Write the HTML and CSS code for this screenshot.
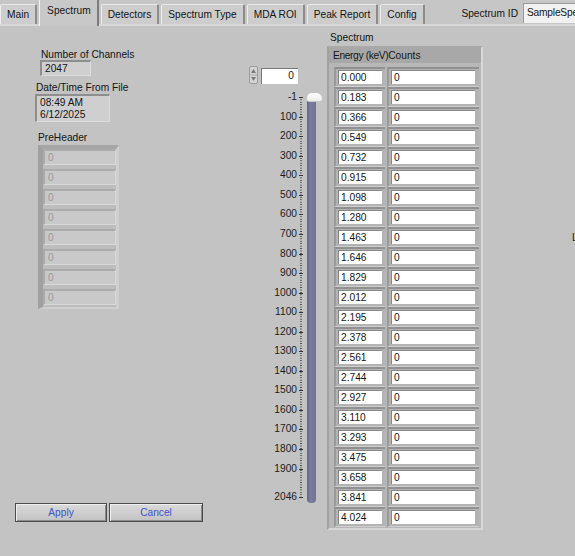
FILE: index.html
```html
<!DOCTYPE html>
<html lang="en">
<head>
    <meta charset="UTF-8">
    <title>Spectrum</title>
    <link rel="stylesheet" href="styles.css">
</head>
<body>

    <div class="tabbar">
        <div class="tab">Main</div>
        <div class="tab tab-active">Spectrum</div>
        <div class="tab">Detectors</div>
        <div class="tab">Spectrum Type</div>
        <div class="tab">MDA ROI</div>
        <div class="tab">Peak Report</div>
        <div class="tab">Config</div>
        <div class="spec-id">
            <span class="spec-id-label">Spectrum ID</span>
            <div class="spec-id-box">SampleSpec</div>
        </div>
    </div>

    <div class="page">

        <!-- left: file info -->
        <div class="left">
            <div class="num-label">Number of Channels</div>
            <div class="ind num-box">2047</div>
            <div class="dt-label">Date/Time From File</div>
            <div class="ind dt-box">08:49 AM<br>6/12/2025</div>
            <div class="pre-label">PreHeader</div>
            <div class="pre-array">
                <div class="pre-item">0</div>
                <div class="pre-item">0</div>
                <div class="pre-item">0</div>
                <div class="pre-item">0</div>
                <div class="pre-item">0</div>
                <div class="pre-item">0</div>
                <div class="pre-item">0</div>
                <div class="pre-item">0</div>
            </div>
            <div class="buttons">
                <div class="btn btn-apply">Apply</div>
                <div class="btn btn-cancel">Cancel</div>
            </div>
        </div>

        <!-- middle: index control + scrollbar slider -->
        <div class="scale-col">
            <div class="numctl">
                <div class="spin">
                    <svg width="7" height="16" viewBox="0 0 7 16">
                        <path d="M3.5 2 L6 6 L1 6 Z" fill="#7a7a7a"/>
                        <line x1="0" y1="8" x2="7" y2="8" stroke="#a8a8a8" stroke-width="1"/>
                        <path d="M1 10 L6 10 L3.5 14 Z" fill="#7a7a7a"/>
                    </svg>
                </div>
                <div class="num-input">0</div>
            </div>
            <div class="slider">
                <div class="labels">
                    <span class="lbl" style="top:5.0px">-1</span>
                    <span class="lbl" style="top:24.7px">100</span>
                    <span class="lbl" style="top:44.3px">200</span>
                    <span class="lbl" style="top:63.8px">300</span>
                    <span class="lbl" style="top:83.4px">400</span>
                    <span class="lbl" style="top:102.9px">500</span>
                    <span class="lbl" style="top:122.4px">600</span>
                    <span class="lbl" style="top:142.0px">700</span>
                    <span class="lbl" style="top:161.5px">800</span>
                    <span class="lbl" style="top:181.1px">900</span>
                    <span class="lbl" style="top:200.6px">1000</span>
                    <span class="lbl" style="top:220.1px">1100</span>
                    <span class="lbl" style="top:239.7px">1200</span>
                    <span class="lbl" style="top:259.2px">1300</span>
                    <span class="lbl" style="top:278.8px">1400</span>
                    <span class="lbl" style="top:298.3px">1500</span>
                    <span class="lbl" style="top:317.9px">1600</span>
                    <span class="lbl" style="top:337.4px">1700</span>
                    <span class="lbl" style="top:356.9px">1800</span>
                    <span class="lbl" style="top:376.5px">1900</span>
                    <span class="lbl" style="top:405.0px">2046</span>
                </div>
                <div class="ticks"></div>
                <div class="track-wrap">
                    <div class="track"></div>
                    <div class="thumb"></div>
                </div>
            </div>
        </div>

        <!-- right: spectrum table -->
        <div class="spectrum">
            <div class="spec-label">Spectrum</div>
            <div class="spec-frame">
                <div class="spec-head">
                    <span class="head-energy">Energy (keV)</span><span>Counts</span>
                </div>
                <div class="rows">
                    <div class="row"><div class="cell c-energy"><div class="box">0.000</div></div><div class="cell c-counts"><div class="box">0</div></div></div>
                    <div class="row"><div class="cell c-energy"><div class="box">0.183</div></div><div class="cell c-counts"><div class="box">0</div></div></div>
                    <div class="row"><div class="cell c-energy"><div class="box">0.366</div></div><div class="cell c-counts"><div class="box">0</div></div></div>
                    <div class="row"><div class="cell c-energy"><div class="box">0.549</div></div><div class="cell c-counts"><div class="box">0</div></div></div>
                    <div class="row"><div class="cell c-energy"><div class="box">0.732</div></div><div class="cell c-counts"><div class="box">0</div></div></div>
                    <div class="row"><div class="cell c-energy"><div class="box">0.915</div></div><div class="cell c-counts"><div class="box">0</div></div></div>
                    <div class="row"><div class="cell c-energy"><div class="box">1.098</div></div><div class="cell c-counts"><div class="box">0</div></div></div>
                    <div class="row"><div class="cell c-energy"><div class="box">1.280</div></div><div class="cell c-counts"><div class="box">0</div></div></div>
                    <div class="row"><div class="cell c-energy"><div class="box">1.463</div></div><div class="cell c-counts"><div class="box">0</div></div></div>
                    <div class="row"><div class="cell c-energy"><div class="box">1.646</div></div><div class="cell c-counts"><div class="box">0</div></div></div>
                    <div class="row"><div class="cell c-energy"><div class="box">1.829</div></div><div class="cell c-counts"><div class="box">0</div></div></div>
                    <div class="row"><div class="cell c-energy"><div class="box">2.012</div></div><div class="cell c-counts"><div class="box">0</div></div></div>
                    <div class="row"><div class="cell c-energy"><div class="box">2.195</div></div><div class="cell c-counts"><div class="box">0</div></div></div>
                    <div class="row"><div class="cell c-energy"><div class="box">2.378</div></div><div class="cell c-counts"><div class="box">0</div></div></div>
                    <div class="row"><div class="cell c-energy"><div class="box">2.561</div></div><div class="cell c-counts"><div class="box">0</div></div></div>
                    <div class="row"><div class="cell c-energy"><div class="box">2.744</div></div><div class="cell c-counts"><div class="box">0</div></div></div>
                    <div class="row"><div class="cell c-energy"><div class="box">2.927</div></div><div class="cell c-counts"><div class="box">0</div></div></div>
                    <div class="row"><div class="cell c-energy"><div class="box">3.110</div></div><div class="cell c-counts"><div class="box">0</div></div></div>
                    <div class="row"><div class="cell c-energy"><div class="box">3.293</div></div><div class="cell c-counts"><div class="box">0</div></div></div>
                    <div class="row"><div class="cell c-energy"><div class="box">3.475</div></div><div class="cell c-counts"><div class="box">0</div></div></div>
                    <div class="row"><div class="cell c-energy"><div class="box">3.658</div></div><div class="cell c-counts"><div class="box">0</div></div></div>
                    <div class="row"><div class="cell c-energy"><div class="box">3.841</div></div><div class="cell c-counts"><div class="box">0</div></div></div>
                    <div class="row"><div class="cell c-energy"><div class="box">4.024</div></div><div class="cell c-counts"><div class="box">0</div></div></div>
                </div>
            </div>
        </div>

        <div class="far">L</div>

    </div>

</body>
</html>
```

FILE: styles.css
```css
body {
    margin: 0;
    width: 575px;
    height: 556px;
    overflow: hidden;
    background-color: #c3c3c3;
    color: #151515;
    font-family: "Liberation Sans", Arial, sans-serif;
    font-size: 10.2px;
}

/* tab strip */
.tabbar {
    display: flex;
    align-items: flex-end;
    height: 24px;
    border-bottom: 2px solid #d8d8d8;
    background-color: #c6c6c6;
}
.tab {
    height: 20px;
    line-height: 19px;
    padding: 0 6px;
    margin-right: 2px;
    box-sizing: border-box;
    background-color: #cdcdcd;
    border-top: 1px solid #e8e8e8;
    border-left: 1px solid #ededed;
    border-right: 2px solid #8c8c8c;
    border-radius: 2px 2px 0 0;
    white-space: nowrap;
    flex-shrink: 0;
}
.tab-active {
    height: 27px;
    line-height: 22px;
    margin-bottom: -2px;
    padding: 0 6px 0 7px;
    background-color: #c8c8c8;
    border-left: 1px solid #f2f2f2;
    border-right: 2px solid #7c7c7c;
    position: relative;
}
.spec-id {
    margin-left: auto;
    display: flex;
    align-self: flex-start;
    align-items: center;
    margin-top: 3px;
}
.spec-id-label {
    margin-right: 5px;
    white-space: nowrap;
}
.spec-id-box {
    width: 52px;
    height: 20px;
    line-height: 18px;
    box-sizing: border-box;
    padding-left: 3px;
    background-color: #f1f1f1;
    border-top: 1px solid #9a9a9a;
    border-left: 1px solid #9a9a9a;
    white-space: nowrap;
    letter-spacing: -0.2px;
}

.page {
    display: flex;
    height: 530px;
}

/* left column */
.left {
    width: 235px;
    flex-shrink: 0;
    display: flex;
    flex-direction: column;
    align-items: flex-start;
}
.num-label {
    margin: 23px 0 0 41px;
    line-height: 11px;
}
.ind {
    box-sizing: border-box;
    background-color: #cfcfcf;
    border-top: 2px solid #8e8e8e;
    border-left: 2px solid #8e8e8e;
    border-bottom: 1px solid #dcdcdc;
    border-right: 1px solid #dcdcdc;
    padding-left: 3px;
}
.num-box {
    margin-left: 40px;
    width: 51px;
    height: 16px;
    line-height: 13px;
}
.dt-label {
    margin: 6px 0 0 36px;
    line-height: 12px;
}
.dt-box {
    margin-left: 35px;
    width: 75px;
    height: 28px;
    line-height: 12px;
    padding-top: 1px;
}
.pre-label {
    margin: 10px 0 0 38px;
    line-height: 12px;
}
.pre-array {
    margin: 1px 0 0 38px;
    width: 81px;
    height: 164px;
    box-sizing: border-box;
    background-color: #bdbdbd;
    border-top: 4px solid #a6a6a6;
    border-left: 5px solid #a0a0a0;
    border-right: 3px solid #cfcfcf;
    border-bottom: 2px solid #cfcfcf;
}
.pre-item {
    height: 16px;
    margin-bottom: 4px;
    box-sizing: border-box;
    line-height: 13px;
    padding-left: 3px;
    color: #9a9a9a;
    background-color: #c9c9c9;
    border-top: 2px solid #ababab;
    border-left: 2px solid #ababab;
    border-bottom: 1px solid #d9d9d9;
    border-right: 1px solid #d9d9d9;
}
.buttons {
    display: flex;
    gap: 2px;
    margin: 194px 0 0 15px;
}
.btn {
    height: 19px;
    box-sizing: border-box;
    line-height: 17px;
    text-align: center;
    color: #3a55cf;
    border: 1px solid #4c4c4c;
    background: linear-gradient(#dadada, #c2c2c2);
    box-shadow: inset 1px 1px 0 #f0f0f0, inset -1px -1px 0 #8c8c8c;
}
.btn-apply {
    width: 92px;
}
.btn-cancel {
    width: 94px;
}

/* middle column */
.scale-col {
    width: 92px;
    flex-shrink: 0;
}
.numctl {
    display: flex;
    align-items: flex-start;
    margin: 40px 0 0 14px;
}
.spin {
    width: 9px;
    height: 18px;
    box-sizing: border-box;
    border: 1px solid #9c9c9c;
    border-radius: 2px;
    background-color: #d4d4d4;
}
.spin svg {
    display: block;
}
.num-input {
    margin: 2px 0 0 3px;
    width: 37px;
    height: 16px;
    box-sizing: border-box;
    line-height: 14px;
    padding-right: 4px;
    text-align: right;
    background-color: #fff;
    border-top: 1px solid #7a7a7a;
    border-left: 1px solid #7a7a7a;
}
.slider {
    display: flex;
    margin-top: 3px;
    height: 420px;
}
.labels {
    position: relative;
    width: 63px;
}
.lbl {
    position: absolute;
    right: 1px;
    line-height: 10px;
    color: #1c1c1c;
}
.lbl::after {
    content: '';
    position: absolute;
    right: -6px;
    top: 5px;
    width: 4px;
    height: 1px;
    background-color: #333;
}
.ticks {
    width: 5px;
    height: 400px;
    margin-top: 10px;
    background-image: linear-gradient(#4a4a4a 0 1px, transparent 1px);
    background-size: 2px 2.443px;
    background-position: 2px 0;
    background-repeat: repeat-y;
}
.track-wrap {
    position: relative;
    margin-left: 4px;
    width: 9px;
}
.track {
    margin-top: 9px;
    height: 407px;
    background: linear-gradient(to right, #66668a, #7c7c9e 40%, #72728f);
    border-radius: 0 0 4px 4px;
}
.thumb {
    position: absolute;
    top: 5px;
    left: -1px;
    width: 17px;
    height: 10px;
    box-sizing: border-box;
    border: 1px solid #c4c4c4;
    border-radius: 6px 7px 3px 3px;
    background: linear-gradient(#ffffff, #ececec);
}

/* spectrum table */
.spectrum {
    width: 156px;
    flex-shrink: 0;
}
.spec-label {
    margin: 6px 0 0 3px;
    line-height: 12px;
}
.spec-frame {
    margin-top: 2px;
    height: 484px;
    box-sizing: border-box;
    background-color: #b7b7b7;
    border-top: 2px solid #a9a9a9;
    border-left: 2px solid #a2a2a2;
    border-right: 2px solid #d9d9d9;
    border-bottom: 2px solid #d6d6d6;
}
.spec-head {
    display: flex;
    height: 15px;
    line-height: 15px;
    padding-left: 4px;
    background-color: #a8a8a8;
    white-space: nowrap;
}
.head-energy {
    letter-spacing: -0.35px;
}
.rows {
    padding: 4px 0 0 5px;
}
.row {
    display: flex;
    gap: 2px;
}
.cell {
    height: 20px;
    box-sizing: border-box;
    padding: 1px 3px 2px 2px;
    background-color: #b3b3b3;
    border-top: 2px solid #909090;
    border-left: 2px solid #999;
    border-bottom: 1px solid #cfcfcf;
}
.c-energy {
    width: 51px;
}
.c-counts {
    width: 92px;
    padding-right: 4px;
}
.box {
    height: 14px;
    box-sizing: border-box;
    line-height: 13px;
    padding-left: 2px;
    background-color: #fff;
    border-top: 1px solid #888;
    border-left: 1px solid #888;
}

.far {
    flex-shrink: 0;
    margin: 206px 0 0 89px;
    line-height: 12px;
    color: #222;
}
```
